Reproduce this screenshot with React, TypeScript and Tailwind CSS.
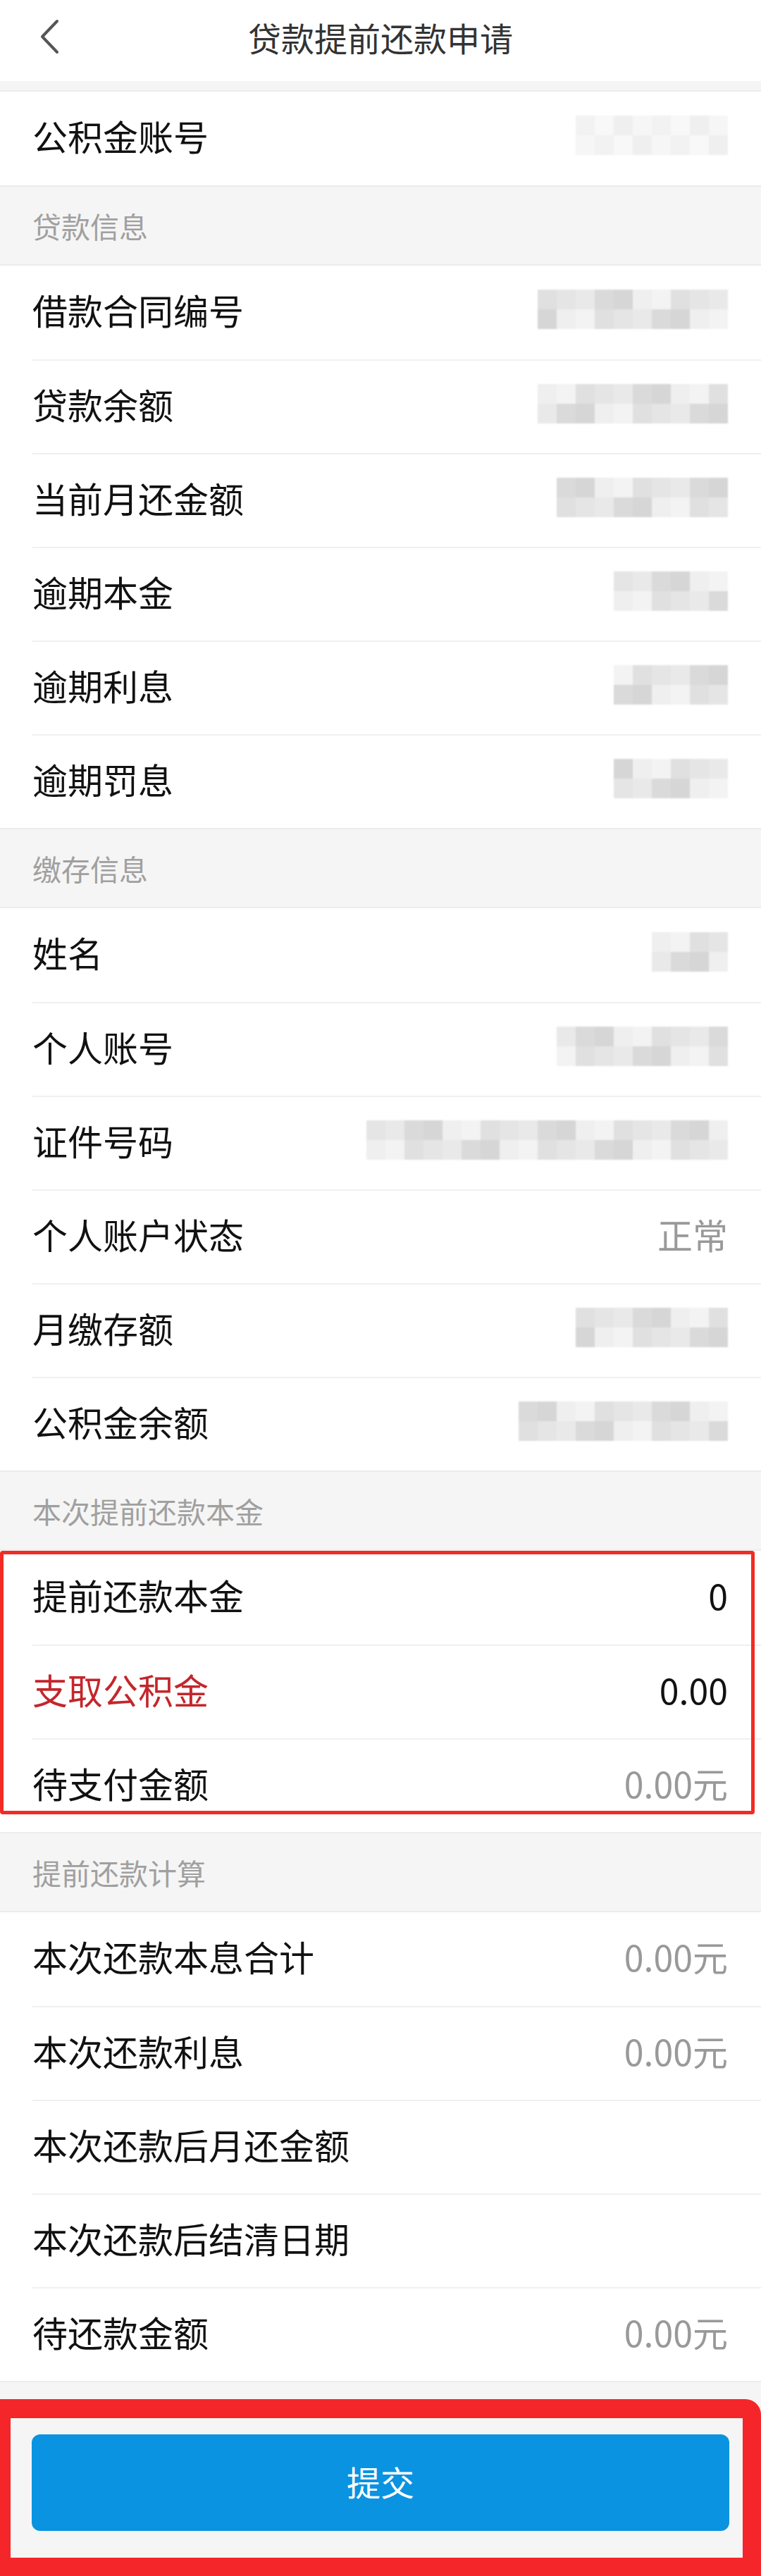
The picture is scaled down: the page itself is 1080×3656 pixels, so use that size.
import React from 'react';

const FONT = '"Noto Sans CJK SC", "Noto Sans", sans-serif';

const shades = [
  'bg-[#e9e9e9]',
  'bg-[#e0e0e0]',
  'bg-[#efefef]',
  'bg-[#dadada]',
  'bg-[#e5e5e5]',
  'bg-[#f3f3f3]',
  'bg-[#d6d6d6]',
];

const faintShades = ['bg-[#f2f2f2]', 'bg-[#f6f6f6]', 'bg-[#efefef]', 'bg-[#f8f8f8]'];

// pixelated, blurred placeholder standing in for masked values
function Masked({ cols, seed = 0, faint = false }: { cols: number; seed?: number; faint?: boolean }) {
  const set = faint ? faintShades : shades;
  return (
    <div className="flex flex-col blur-[1px]">
      {[0, 1].map((r) => (
        <div key={r} className="flex">
          {Array.from({ length: cols }).map((_, c) => (
            <div key={c} className={`h-[28px] w-[27px] ${set[(c * 3 + r * 5 + seed) % set.length]}`} />
          ))}
        </div>
      ))}
    </div>
  );
}

interface RowItem {
  label: string;
  red?: boolean;
  value?: React.ReactNode;
}

function Row({ item, first }: { item: RowItem; first: boolean }) {
  return (
    <div className="bg-white pl-[46px]">
      <div
        className={`flex h-[133px] items-center justify-between pb-[10px] pr-[47px] ${
          first ? '' : 'border-t-2 border-[#f0f0f0]'
        }`}
      >
        <span className={`text-[50px] leading-none ${item.red ? 'text-[#c3262c]' : 'text-[#111]'}`}>
          {item.label}
        </span>
        <div className="flex items-center">{item.value}</div>
      </div>
    </div>
  );
}

function Group({ rows }: { rows: RowItem[] }) {
  return (
    <div>
      {rows.map((r, i) => (
        <Row key={r.label} item={r} first={i === 0} />
      ))}
    </div>
  );
}

function Section({ title }: { title: string }) {
  return (
    <div className="flex h-[114px] items-center border-y-2 border-[#ececec] bg-[#f5f5f5] pl-[46px]">
      <span className="text-[41px] leading-none text-[#a0a0a0]">{title}</span>
    </div>
  );
}

const grey = (t: string) => <span className="text-[50px] leading-none text-[#999]">{t}</span>;
const dark = (t: string) => <span className="text-[50px] leading-none text-[#111]">{t}</span>;

export default function App() {
  const loanRows: RowItem[] = [
    { label: '借款合同编号', value: <Masked cols={10} seed={1} /> },
    { label: '贷款余额', value: <Masked cols={10} seed={2} /> },
    { label: '当前月还金额', value: <Masked cols={9} seed={3} /> },
    { label: '逾期本金', value: <Masked cols={6} seed={4} /> },
    { label: '逾期利息', value: <Masked cols={6} seed={5} /> },
    { label: '逾期罚息', value: <Masked cols={6} seed={6} /> },
  ];

  const depositRows: RowItem[] = [
    { label: '姓名', value: <Masked cols={4} seed={2} /> },
    { label: '个人账号', value: <Masked cols={9} seed={0} /> },
    { label: '证件号码', value: <Masked cols={19} seed={4} /> },
    { label: '个人账户状态', value: grey('正常') },
    { label: '月缴存额', value: <Masked cols={8} seed={1} /> },
    { label: '公积金余额', value: <Masked cols={11} seed={3} /> },
  ];

  const principalRows: RowItem[] = [
    { label: '提前还款本金', value: dark('0') },
    { label: '支取公积金', red: true, value: dark('0.00') },
    { label: '待支付金额', value: grey('0.00元') },
  ];

  const calcRows: RowItem[] = [
    { label: '本次还款本息合计', value: grey('0.00元') },
    { label: '本次还款利息', value: grey('0.00元') },
    { label: '本次还款后月还金额' },
    { label: '本次还款后结清日期' },
    { label: '待还款金额', value: grey('0.00元') },
  ];

  return (
    <div className="min-h-[3656px] w-[1080px] bg-[#f5f5f5]" style={{ fontFamily: FONT }}>
      {/* Header */}
      <div className="relative flex h-[115px] items-center justify-center bg-white pb-[10px]">
        <svg
          className="absolute left-[52px] top-[26px]"
          width="36"
          height="52"
          viewBox="0 0 36 52"
          fill="none"
        >
          <path d="M29 4 L8 26 L29 48" stroke="#555" strokeWidth="4" strokeLinecap="round" strokeLinejoin="round" />
        </svg>
        <span className="text-[47px] leading-none text-[#333]">贷款提前还款申请</span>
      </div>

      <div className="h-[15px] border-b-2 border-[#ececec] bg-[#f5f5f5]" />

      <Group rows={[{ label: '公积金账号', value: <Masked cols={8} seed={0} faint /> }]} />

      <Section title="贷款信息" />
      <Group rows={loanRows} />

      <Section title="缴存信息" />
      <Group rows={depositRows} />

      <Section title="本次提前还款本金" />
      <div className="relative">
        <Group rows={principalRows} />
        <div className="pointer-events-none absolute bottom-[25px] left-0 right-[9px] top-0 rounded-[4px] border-[5px] border-[#f22b24]" />
      </div>

      <Section title="提前还款计算" />
      <Group rows={calcRows} />

      {/* Submit */}
      <div className="relative border-t-2 border-[#ececec] bg-[#f5f5f5] px-[45px] pb-[64px] pt-[74px]">
        <button className="flex h-[137px] w-full items-center justify-center rounded-[12px] bg-[#0993e0] pb-[6px] text-[48px] text-white">
          提交
        </button>
        <div className="pointer-events-none absolute bottom-0 left-0 right-0 top-[24px] rounded-tr-[22px] border-b-[26px] border-l-[15px] border-r-[26px] border-t-[27px] border-[#f5262a]" />
      </div>
    </div>
  );
}
